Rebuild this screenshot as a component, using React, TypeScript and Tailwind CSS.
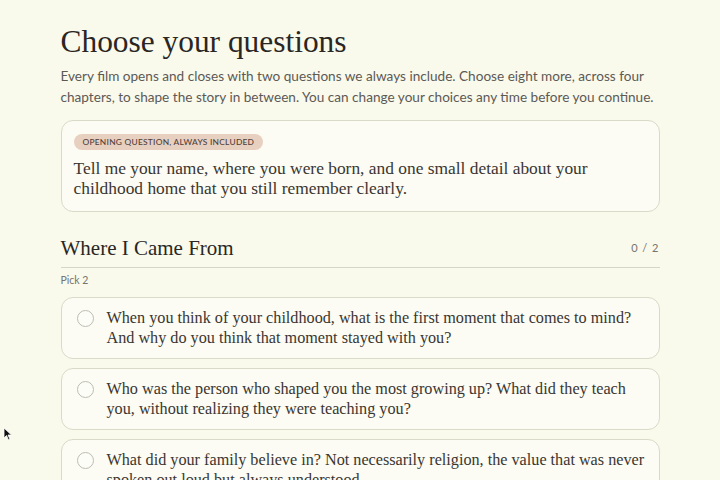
const serif = { fontFamily: '"Liberation Serif", "DejaVu Serif", serif' }

interface Question {
  id: string
  text: string
}

const chapterOne: Question[] = [
  {
    id: 'q1',
    text: 'When you think of your childhood, what is the first moment that comes to mind? And why do you think that moment stayed with you?',
  },
  {
    id: 'q2',
    text: 'Who was the person who shaped you the most growing up? What did they teach you, without realizing they were teaching you?',
  },
  {
    id: 'q3',
    text: 'What did your family believe in? Not necessarily religion, the value that was never spoken out loud but always understood.',
  },
]

function QuestionOption({ question }: { question: Question }) {
  return (
    <button
      type="button"
      className="flex w-full items-start gap-[13px] rounded-xl border border-[#d9dac8] bg-[#fcfcf4] pl-[15px] pr-[10px] pt-[10px] pb-[10px] text-left"
    >
      <span className="mt-[1.5px] h-[17px] w-[17px] shrink-0 rounded-full border-[1.5px] border-[#bcbdb1] bg-[#fdfdf8]" />
      <span className="text-[16.2px] leading-[20px] text-[#3a3632]" style={serif}>
        {question.text}
      </span>
    </button>
  )
}

export default function App() {
  return (
    <div
      className="relative h-[480px] overflow-hidden bg-[#f9faec] text-[#3a3632]"
      style={{ fontFamily: 'Lato, "Open Sans", sans-serif' }}
    >
      <main className="mx-auto w-[599px] pt-[24px]">
        <h1 className="text-[31.4px] leading-[36px] text-[#2a2623]" style={serif}>
          Choose your questions
        </h1>
        <p className="mt-[6px] text-[13.6px] leading-[21px] text-[#5d5955]">
          Every film opens and closes with two questions we always include. Choose eight more, across four
          chapters, to shape the story in between. You can change your choices any time before you continue.
        </p>

        <section className="mt-[12px] flex flex-col items-start rounded-xl border border-[#d9dac8] bg-[#fcfcf4] pl-[12px] pr-[20px] pt-[13px] pb-[13px]">
          <span className="rounded-full bg-[#e8d0c1] px-[9px] text-[8.4px] font-medium leading-[16px] tracking-[0.25px] text-[#4f4139]">
            OPENING QUESTION, ALWAYS INCLUDED
          </span>
          <p className="mt-[8px] text-[17.4px] leading-[20px] text-[#3a3632]" style={serif}>
            Tell me your name, where you were born, and one small detail about your childhood home that you still
            remember clearly.
          </p>
        </section>

        <section className="mt-[23px]">
          <div className="flex items-center justify-between border-b border-[#d5d6c6] pb-[6px]">
            <h2 className="text-[21px] leading-[26px] text-[#2a2623]" style={serif}>
              Where I Came From
            </h2>
            <span className="text-[11px] tracking-[1px] text-[#77736e]">0 / 2</span>
          </div>
          <p className="mt-[5px] text-[10.5px] leading-[14px] text-[#77736e]">Pick 2</p>
          <div className="mt-[10px] flex flex-col gap-[9px]">
            {chapterOne.map((q) => (
              <QuestionOption key={q.id} question={q} />
            ))}
          </div>
        </section>
      </main>

      <svg className="absolute left-[3px] top-[427px]" width="10" height="14" viewBox="0 0 10 14">
        <path d="M1 1 L1 11 L3.5 8.5 L5.5 13 L7 12.3 L5 8 L8.5 8 Z" fill="#111" stroke="#fff" strokeWidth="0.8" />
      </svg>
    </div>
  )
}
